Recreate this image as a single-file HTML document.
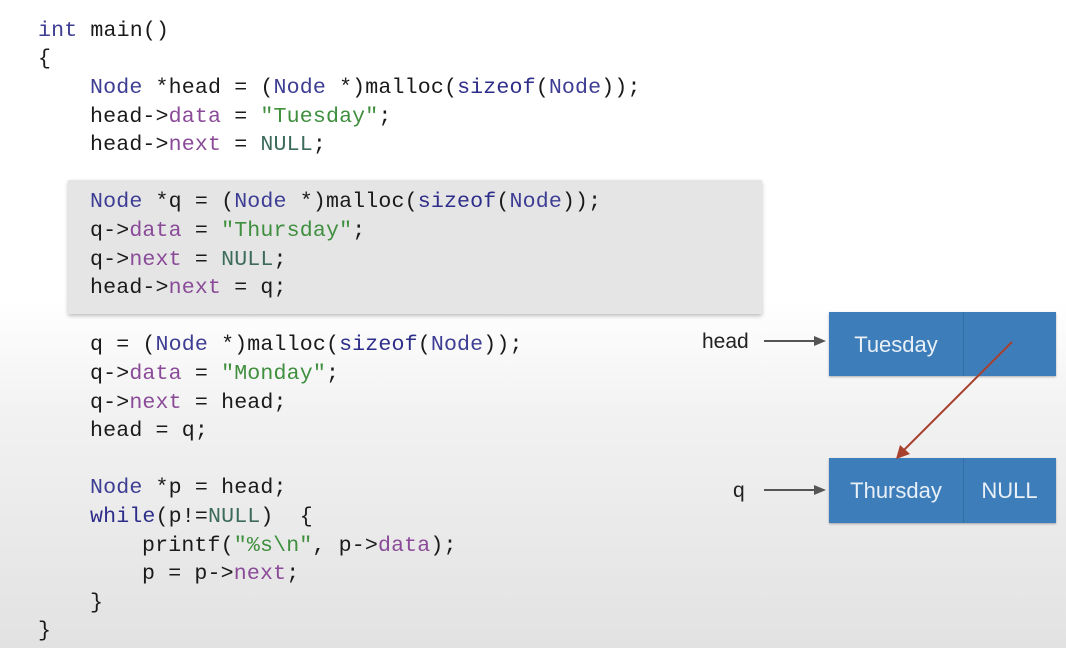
<!DOCTYPE html>
<html><head><meta charset="utf-8"><style>
html,body{margin:0;padding:0}
body{width:1066px;height:648px;position:relative;overflow:hidden;background:linear-gradient(#ffffff 0px,#ffffff 300px,#f1f1f1 420px,#e2e2e2 648px);font-family:"Liberation Mono",monospace;}
.l{position:absolute;font-size:21.6px;line-height:28px;white-space:pre;color:#1a1a1a;letter-spacing:0.15px;}
.k{color:#3d3d94}.s{color:#2d2d8a}.p{color:#8a4a98}.g{color:#3f8f3f}.n{color:#3d6b5a}.i{color:#3d3d94}
.box{position:absolute;left:68px;top:180px;width:694px;height:134px;background:#e5e5e6;box-shadow:0 2px 4px rgba(0,0,0,.25);}
.nd{position:absolute;background:#3d7db9;box-shadow:0 1px 2px rgba(0,0,0,.3);color:#e9f0f7;font-family:"Liberation Sans",sans-serif;font-size:22px;}
.nd span{position:absolute;top:1px;line-height:64px;text-align:center}
.lbl{position:absolute;font-family:"Liberation Sans",sans-serif;font-size:21px;color:#222;}
</style></head><body>
<div class="box"></div>
<div class="l" style="left:38px;top:17px"><span class="k">int</span> main()</div>
<div class="l" style="left:38px;top:45px">{</div>
<div class="l" style="left:90px;top:74px"><span class="k">Node</span> *head = (<span class="k">Node</span> *)malloc(<span class="s">sizeof</span>(<span class="k">Node</span>));</div>
<div class="l" style="left:90px;top:103px">head-&gt;<span class="p">data</span> = <span class="g">"Tuesday"</span>;</div>
<div class="l" style="left:90px;top:131px">head-&gt;<span class="p">next</span> = <span class="n">NULL</span>;</div>
<div class="l" style="left:90px;top:188px"><span class="k">Node</span> *q = (<span class="k">Node</span> *)malloc(<span class="s">sizeof</span>(<span class="k">Node</span>));</div>
<div class="l" style="left:90px;top:217px">q-&gt;<span class="p">data</span> = <span class="g">"Thursday"</span>;</div>
<div class="l" style="left:90px;top:246px">q-&gt;<span class="p">next</span> = <span class="n">NULL</span>;</div>
<div class="l" style="left:90px;top:274px">head-&gt;<span class="p">next</span> = q;</div>
<div class="l" style="left:90px;top:331px">q = (<span class="k">Node</span> *)malloc(<span class="s">sizeof</span>(<span class="k">Node</span>));</div>
<div class="l" style="left:90px;top:360px">q-&gt;<span class="p">data</span> = <span class="g">"Monday"</span>;</div>
<div class="l" style="left:90px;top:389px">q-&gt;<span class="p">next</span> = head;</div>
<div class="l" style="left:90px;top:417px">head = q;</div>
<div class="l" style="left:90px;top:474px"><span class="k">Node</span> *p = head;</div>
<div class="l" style="left:90px;top:503px"><span class="s">while</span>(p!=<span class="n">NULL</span>)  {</div>
<div class="l" style="left:142px;top:532px">printf(<span class="g">"%s\n"</span>, p-&gt;<span class="p">data</span>);</div>
<div class="l" style="left:142px;top:560px">p = p-&gt;<span class="p">next</span>;</div>
<div class="l" style="left:90px;top:589px">}</div>
<div class="l" style="left:38px;top:617px">}</div>

<div class="nd" style="left:829px;top:312px;width:227px;height:64px"><span style="left:0;width:134px">Tuesday</span></div>
<div class="nd" style="left:829px;top:458px;width:227px;height:65px"><span style="left:0;width:134px">Thursday</span><span style="left:134px;width:93px">NULL</span></div>
<div style="position:absolute;left:963px;top:312px;width:1px;height:64px;background:#336ea6"></div>
<div style="position:absolute;left:963px;top:458px;width:1px;height:65px;background:#336ea6"></div>
<div class="lbl" style="left:702px;top:330px">head</div>
<div class="lbl" style="left:733px;top:479px">q</div>
<svg width="1066" height="648" style="position:absolute;left:0;top:0">
<g stroke="#555" stroke-width="2" fill="#555">
<line x1="764" y1="341" x2="816" y2="341"/><polygon points="826,341 814,336 814,346" stroke="none"/>
<line x1="764" y1="490" x2="816" y2="490"/><polygon points="826,490 814,485 814,495" stroke="none"/>
</g>
<line x1="1012" y1="342" x2="902" y2="452" stroke="#a8402e" stroke-width="2"/>
<polygon points="896,459 900,445 910,454" fill="#a8402e"/>
</svg>
</body></html>
